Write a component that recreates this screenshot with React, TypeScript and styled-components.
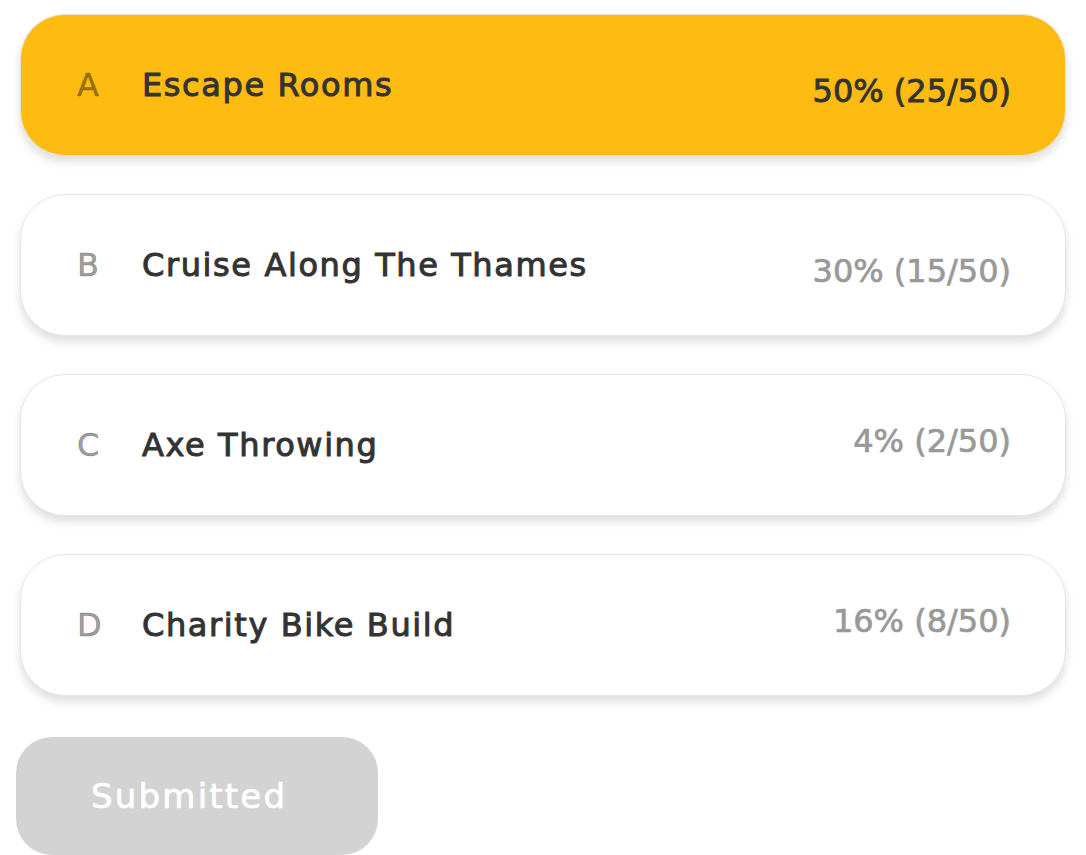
import React from "react";
import styled, { createGlobalStyle } from "styled-components";

const GlobalStyle = createGlobalStyle`
  html, body {
    margin: 0;
    padding: 0;
    background: #ffffff;
  }
  body {
    font-family: "DejaVu Sans", "Liberation Sans", sans-serif;
    -webkit-font-smoothing: antialiased;
  }
`;

const Page = styled.div`
  display: flex;
  flex-direction: column;
  align-items: flex-start;
  padding: 14px 16px 0 16px;
  box-sizing: border-box;
  width: 1086px;
`;

const OptionList = styled.div`
  display: flex;
  flex-direction: column;
  gap: 38px;
  padding: 0 4px;
  width: 100%;
  box-sizing: border-box;
`;

const Card = styled.div<{ $selected?: boolean }>`
  display: flex;
  align-items: center;
  height: 142px;
  box-sizing: border-box;
  padding: 0 54px 0 56px;
  border-radius: 45px;
  border: 1px solid ${(p) => (p.$selected ? "#e9e3d2" : "#e6e6e6")};
  background: ${(p) => (p.$selected ? "#febb12" : "#ffffff")};
  box-shadow: 0 6px 10px rgba(0, 0, 0, 0.13);
`;

const Letter = styled.span`
  width: 65px;
  flex: none;
  font-size: 32px;
  color: rgba(0, 0, 0, 0.4);
  -webkit-text-stroke: 0.5px rgba(0, 0, 0, 0.4);
`;

const Title = styled.span`
  flex: 1;
  font-size: 32px;
  letter-spacing: 1.6px;
  color: #333333;
  -webkit-text-stroke: 1px #333333;
  white-space: nowrap;
`;

const Percent = styled.span<{ $selected?: boolean; $shift: number }>`
  flex: none;
  font-size: 32px;
  white-space: nowrap;
  color: ${(p) => (p.$selected ? "#333333" : "#999999")};
  -webkit-text-stroke: ${(p) => (p.$selected ? "0.9px #333333" : "0.7px #999999")};
  margin-top: ${(p) => Math.max(0, p.$shift * 2)}px;
  margin-bottom: ${(p) => Math.max(0, -p.$shift * 2)}px;
`;

const SubmitButton = styled.button`
  margin-top: 41px;
  width: 362px;
  height: 118px;
  border: none;
  border-radius: 36px;
  background: #d3d3d3;
  color: #ffffff;
  font-family: "DejaVu Sans", "Liberation Sans", sans-serif;
  font-size: 34px;
  letter-spacing: 2.2px;
  -webkit-text-stroke: 0.7px #ffffff;
  text-align: left;
  padding: 0 0 0 75px;
  cursor: default;
`;

type Option = {
  letter: string;
  title: string;
  result: string;
  selected?: boolean;
  shift: number;
};

const options: Option[] = [
  { letter: "A", title: "Escape Rooms", result: "50% (25/50)", selected: true, shift: 6 },
  { letter: "B", title: "Cruise Along The Thames", result: "30% (15/50)", shift: 6 },
  { letter: "C", title: "Axe Throwing", result: "4% (2/50)", shift: -4 },
  { letter: "D", title: "Charity Bike Build", result: "16% (8/50)", shift: -4 },
];

export default function App() {
  return (
    <>
      <GlobalStyle />
      <Page>
        <OptionList>
          {options.map((o) => (
            <Card key={o.letter} $selected={o.selected}>
              <Letter>{o.letter}</Letter>
              <Title>{o.title}</Title>
              <Percent $selected={o.selected} $shift={o.shift}>
                {o.result}
              </Percent>
            </Card>
          ))}
        </OptionList>
        <SubmitButton type="button">Submitted</SubmitButton>
      </Page>
    </>
  );
}
